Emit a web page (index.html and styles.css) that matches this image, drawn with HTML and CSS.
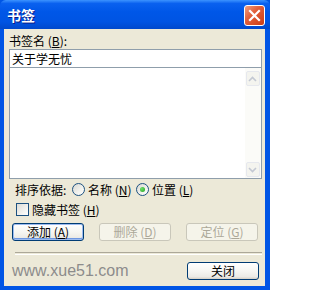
FILE: index.html
```html
<!DOCTYPE html>
<html lang="zh-CN">
<head>
<meta charset="utf-8">
<title>书签</title>
<link rel="stylesheet" href="styles.css">
</head>
<body>
<div class="window">
  <div class="titlebar">
    <span class="title">书签</span>
    <span class="close-x" aria-label="关闭">
      <svg width="13" height="13" viewBox="0 0 13 13"><path d="M2 2 L11 11 M11 2 L2 11" stroke="#fff" stroke-width="2.2" stroke-linecap="square"/></svg>
    </span>
  </div>
  <div class="content">
    <div class="label">书签名 (<u>B</u>):</div>
    <div class="textbox">关于学无忧</div>
    <div class="listbox">
      <div class="list-area"></div>
      <div class="scrollbar">
        <div class="sbtn">
          <svg width="9" height="6" viewBox="0 0 9 6"><path d="M1 5 L4.5 1.5 L8 5" fill="none" stroke="#c3c8d3" stroke-width="1.6"/></svg>
        </div>
        <div class="sbtn">
          <svg width="9" height="6" viewBox="0 0 9 6"><path d="M1 1 L4.5 4.5 L8 1" fill="none" stroke="#c3c8d3" stroke-width="1.6"/></svg>
        </div>
      </div>
    </div>
    <div class="sort-row">
      <span class="sort-label">排序依据:</span>
      <span class="radio"></span>
      <span class="radio-text">名称 (<u>N</u>)</span>
      <span class="radio checked"><span class="dot"></span></span>
      <span class="radio-text">位置 (<u>L</u>)</span>
    </div>
    <div class="check-row">
      <span class="checkbox"></span>
      <span>隐藏书签 (<u>H</u>)</span>
    </div>
    <div class="button-row">
      <span class="btn default">添加 (<u>A</u>)</span>
      <span class="btn disabled">删除 (<u>D</u>)</span>
      <span class="btn disabled">定位 (<u>G</u>)</span>
    </div>
    <div class="separator"></div>
    <div class="bottom-row">
      <span class="watermark">www.xue51.com</span>
      <span class="btn">关闭</span>
    </div>
  </div>
</div>
</body>
</html>
```
FILE: styles.css
```css
html, body {
  margin: 0;
  padding: 0;
  background: #ffffff;
}
body {
  width: 270px;
  height: 290px;
  overflow: hidden;
  font-family: "Noto Sans CJK SC", "Liberation Sans", sans-serif;
  font-size: 12px;
  color: #000;
}
u {
  text-decoration: underline;
  text-underline-offset: 1px;
}
.window {
  width: 270px;
  height: 290px;
  display: flex;
  flex-direction: column;
  background: #0055e5;
}
.titlebar {
  height: 29px;
  flex: none;
  display: flex;
  justify-content: space-between;
  align-items: flex-start;
  background: linear-gradient(#3c93ff 0%, #0a61ef 12%, #0057e8 40%, #0054e3 75%, #0049cc 100%);
  border-radius: 6px 6px 0 0;
}
.title {
  margin-left: 7px;
  margin-top: 6px;
  font-size: 14px;
  line-height: 18px;
  font-weight: bold;
  color: #fff;
  text-shadow: 1px 1px 0 #0a1883;
}
.close-x {
  margin-top: 5px;
  margin-right: 5px;
  width: 21px;
  height: 21px;
  box-sizing: border-box;
  border: 1px solid #fff;
  border-radius: 3px;
  background: linear-gradient(135deg, #f0a080 0%, #e2603c 40%, #cc3c14 100%);
  display: flex;
  align-items: center;
  justify-content: center;
}
.content {
  flex: 1;
  margin: 0 5px 4px 4px;
  background: #ece9d8;
  padding: 4px 0 0 5px;
  display: flex;
  flex-direction: column;
}
.label {
  height: 16px;
  line-height: 16px;
}
.textbox {
  width: 253px;
  height: 19px;
  box-sizing: border-box;
  border: 1px solid #8f9eab;
  background: #fff;
  padding-left: 2px;
  line-height: 17px;
}
.listbox {
  width: 253px;
  height: 111px;
  box-sizing: border-box;
  border: 1px solid #8f9eab;
  border-top: none;
  background: #fff;
  display: flex;
}
.list-area {
  flex: 1;
}
.scrollbar {
  width: 16px;
  padding: 3px 1px 1px 0;
  box-sizing: border-box;
  background: #fbfbf8;
  display: flex;
  flex-direction: column;
  justify-content: space-between;
  align-items: center;
}
.sbtn {
  width: 14px;
  height: 15px;
  box-sizing: border-box;
  border: 1px solid #e6e8ee;
  border-radius: 2px;
  background: #f4f4ef;
  display: flex;
  align-items: center;
  justify-content: center;
}
.sort-row {
  margin-top: 2px;
  height: 16px;
  padding-left: 6px;
  display: flex;
  align-items: center;
}
.sort-label {
  width: 57px;
}
.radio {
  width: 13px;
  height: 13px;
  box-sizing: border-box;
  border: 1px solid #1c5180;
  border-radius: 50%;
  background: linear-gradient(135deg, #d8d8d2 0%, #f2f2ee 60%, #ffffff 100%);
  margin-right: 3px;
  display: flex;
  align-items: center;
  justify-content: center;
  flex: none;
}
.dot {
  width: 5px;
  height: 5px;
  border-radius: 50%;
  background: radial-gradient(circle at 35% 35%, #6fe06a, #21a121);
}
.radio-text {
  width: 48px;
}
.check-row {
  margin-top: 4px;
  height: 16px;
  padding-left: 7px;
  display: flex;
  align-items: center;
}
.checkbox {
  width: 13px;
  height: 13px;
  box-sizing: border-box;
  border: 1px solid #1c5180;
  background: linear-gradient(135deg, #dcdcd7 0%, #f6f6f3 70%, #ffffff 100%);
  margin-right: 3px;
}
.button-row {
  margin-top: 6px;
  padding-left: 3px;
  display: flex;
  gap: 15px;
}
.btn {
  width: 72px;
  height: 18px;
  box-sizing: border-box;
  border: 1px solid #003c74;
  border-radius: 3px;
  background: linear-gradient(#ffffff 0%, #f6f6f2 50%, #ecebe6 85%, #d6d0c5 100%);
  display: flex;
  align-items: center;
  justify-content: center;
  line-height: 14px;
}
.btn.default {
  box-shadow: inset 0 0 0 1px #9cbbef, inset 0 -1px 0 1px #6e97e0;
}
.btn.disabled {
  border-color: #c9c7ba;
  background: #f5f4ea;
  color: #aca899;
}
.separator {
  margin-top: 11px;
  margin-left: 6px;
  width: 247px;
  height: 1px;
  border-top: 1px solid #aca899;
  border-bottom: 1px solid #ffffff;
}
.bottom-row {
  margin-top: 7px;
  display: flex;
  justify-content: space-between;
  align-items: center;
  padding-right: 6px;
}
.watermark {
  margin-left: 3px;
  font-family: "Liberation Sans", Arial, sans-serif;
  font-size: 16px;
  line-height: 18px;
  color: #8c8c8c;
}
```
